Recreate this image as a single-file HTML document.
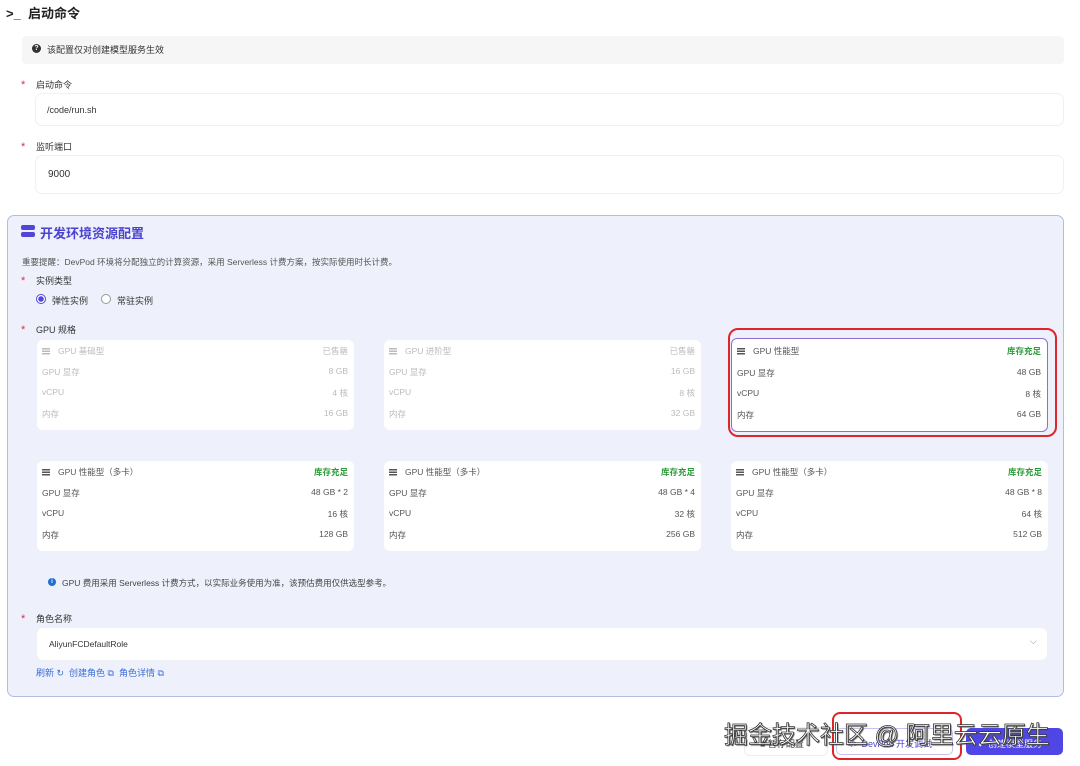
<!DOCTYPE html><html><head><meta charset="utf-8"><style>
*{box-sizing:border-box;margin:0;padding:0}
body{width:1080px;height:766px;background:#fff;font-family:"Liberation Sans","Noto Sans CJK SC",sans-serif;position:relative;overflow:hidden;color:#333}
.a{position:absolute}
.f9{font-size:9px}
.star{color:#d0334b;font-size:11px}
.inp{background:#fff;border-radius:6px;box-shadow:0 0 0 1px #f0f0f2}
.card{position:absolute;width:317px;height:90px;background:#fff;border-radius:6px;font-size:8.5px;color:#555}
.card .r{position:absolute;left:5px;right:6px;display:flex;justify-content:space-between}
.card.dis{color:#bbb}
.ok{color:#2e9b3a;font-weight:bold}
.ic{display:inline-block;width:8px;height:7px;background:repeating-linear-gradient(#555 0 1.5px,transparent 1.5px 2.5px);margin-right:8px;vertical-align:middle}
.dis .ic{background:repeating-linear-gradient(#bbb 0 1.5px,transparent 1.5px 2.5px)}
.lnk{color:#3b6fd6;font-size:9px}
</style></head><body>
<div class="a" style="left:6px;top:3px;font-size:13px;font-weight:bold;color:#222">&gt;_&nbsp; 启动命令</div>
<div class="a" style="left:22px;top:36px;width:1042px;height:28px;background:#f6f6f7;border-radius:4px"></div>
<div class="a" style="left:32px;top:44px;width:9px;height:9px;border-radius:50%;background:#333;color:#fff;font-size:7px;text-align:center;line-height:9px;font-weight:bold">?</div>
<div class="a f9" style="left:47px;top:43px">该配置仅对创建模型服务生效</div>
<div class="a star" style="left:21px;top:79px">*</div><div class="a f9" style="left:36px;top:78px">启动命令</div>
<div class="a inp" style="left:36px;top:94px;width:1027px;height:31px"></div>
<div class="a f9" style="left:47px;top:105px">/code/run.sh</div>
<div class="a star" style="left:21px;top:141px">*</div><div class="a f9" style="left:36px;top:140px">监听端口</div>
<div class="a inp" style="left:36px;top:156px;width:1027px;height:37px"></div>
<div class="a" style="left:48px;top:169px;font-size:10px">9000</div>

<div class="a" style="left:7px;top:215px;width:1057px;height:482px;background:#eef1fb;border:1px solid #b8bbe0;border-radius:7px"></div>
<div class="a" style="left:21px;top:225px;width:14px;height:5px;background:#5046d8;border-radius:2px"></div>
<div class="a" style="left:21px;top:232px;width:14px;height:5px;background:#5046d8;border-radius:2px"></div>
<div class="a" style="left:40px;top:223px;font-size:13px;font-weight:bold;color:#4b42cf">开发环境资源配置</div>
<div class="a" style="left:22px;top:256px;font-size:8.5px;color:#555">重要提醒：DevPod 环境将分配独立的计算资源，采用 Serverless 计费方案，按实际使用时长计费。</div>
<div class="a star" style="left:21px;top:275px">*</div><div class="a f9" style="left:36px;top:274px">实例类型</div>
<div class="a" style="left:36px;top:294px;width:10px;height:10px;border-radius:50%;border:1px solid #5046d8;background:radial-gradient(#5046d8 2.5px,#fff 3px)"></div>
<div class="a f9" style="left:52px;top:294px">弹性实例</div>
<div class="a" style="left:101px;top:294px;width:10px;height:10px;border-radius:50%;border:1px solid #999;background:#fff"></div>
<div class="a f9" style="left:117px;top:294px">常驻实例</div>
<div class="a star" style="left:21px;top:324px">*</div><div class="a f9" style="left:36px;top:323px">GPU 规格</div>

<div class="card dis" style="left:37px;top:340px"><div class="r" style="top:5px"><span><i class="ic"></i>GPU 基础型</span><span>已售罄</span></div><div class="r" style="top:26px"><span>GPU 显存</span><span>8 GB</span></div><div class="r" style="top:47px"><span>vCPU</span><span>4 核</span></div><div class="r" style="top:68px"><span>内存</span><span>16 GB</span></div></div>
<div class="card dis" style="left:384px;top:340px"><div class="r" style="top:5px"><span><i class="ic"></i>GPU 进阶型</span><span>已售罄</span></div><div class="r" style="top:26px"><span>GPU 显存</span><span>16 GB</span></div><div class="r" style="top:47px"><span>vCPU</span><span>8 核</span></div><div class="r" style="top:68px"><span>内存</span><span>32 GB</span></div></div>
<div class="card" style="left:731px;top:338px;height:94px;border:1px solid #8b6fd6"><div class="r" style="top:6px"><span><i class="ic"></i>GPU 性能型</span><span class="ok">库存充足</span></div><div class="r" style="top:28px"><span>GPU 显存</span><span>48 GB</span></div><div class="r" style="top:49px"><span>vCPU</span><span>8 核</span></div><div class="r" style="top:70px"><span>内存</span><span>64 GB</span></div></div>
<div class="a" style="left:728px;top:328px;width:329px;height:109px;border:2.5px solid #e0252a;border-radius:10px"></div>

<div class="card" style="left:37px;top:461px"><div class="r" style="top:5px"><span><i class="ic"></i>GPU 性能型（多卡）</span><span class="ok">库存充足</span></div><div class="r" style="top:26px"><span>GPU 显存</span><span>48 GB * 2</span></div><div class="r" style="top:47px"><span>vCPU</span><span>16 核</span></div><div class="r" style="top:68px"><span>内存</span><span>128 GB</span></div></div>
<div class="card" style="left:384px;top:461px"><div class="r" style="top:5px"><span><i class="ic"></i>GPU 性能型（多卡）</span><span class="ok">库存充足</span></div><div class="r" style="top:26px"><span>GPU 显存</span><span>48 GB * 4</span></div><div class="r" style="top:47px"><span>vCPU</span><span>32 核</span></div><div class="r" style="top:68px"><span>内存</span><span>256 GB</span></div></div>
<div class="card" style="left:731px;top:461px"><div class="r" style="top:5px"><span><i class="ic"></i>GPU 性能型（多卡）</span><span class="ok">库存充足</span></div><div class="r" style="top:26px"><span>GPU 显存</span><span>48 GB * 8</span></div><div class="r" style="top:47px"><span>vCPU</span><span>64 核</span></div><div class="r" style="top:68px"><span>内存</span><span>512 GB</span></div></div>

<div class="a" style="left:48px;top:578px;width:8px;height:8px;border-radius:50%;background:#1f6fd0;color:#fff;font-size:6px;text-align:center;line-height:8px;font-weight:bold">i</div>
<div class="a" style="left:62px;top:577px;font-size:8.5px;color:#444">GPU 费用采用 Serverless 计费方式，以实际业务使用为准，该预估费用仅供选型参考。</div>
<div class="a star" style="left:21px;top:613px">*</div><div class="a f9" style="left:36px;top:612px">角色名称</div>
<div class="a inp" style="left:37px;top:628px;width:1010px;height:32px"></div>
<div class="a" style="left:49px;top:639px;font-size:8.5px">AliyunFCDefaultRole</div>
<div class="a" style="left:1030px;top:636px;font-size:9px;color:#888">⌵</div>
<div class="a lnk" style="left:36px;top:666px">刷新 ↻ &nbsp;创建角色 ⧉ &nbsp;角色详情 ⧉</div>

<div class="a" style="left:745px;top:728px;width:82px;height:27px;background:#fff;border-radius:5px;box-shadow:0 0 0 1px #eee"></div>
<div class="a f9" style="left:760px;top:737px;color:#333">■ 暂存配置</div>
<div class="a" style="left:836px;top:728px;width:117px;height:27px;background:#fff;border:1px solid #c9c2ee;border-radius:5px"></div>
<div class="a f9" style="left:846px;top:737px;color:#4b42cf">&lt;/&gt; DevPod 开发调试</div>
<div class="a" style="left:966px;top:728px;width:97px;height:27px;background:#4f46e5;border-radius:5px"></div>
<div class="a f9" style="left:978px;top:737px;color:#fff">✔ 创建模型服务</div>
<div class="a" style="left:832px;top:712px;width:130px;height:48px;border:2.5px solid #e0252a;border-radius:8px"></div>
<div class="a" style="left:724px;top:715px;font-size:24px;color:#fff;-webkit-text-stroke:0.8px #333;text-shadow:1px 1px 1px #555">掘金技术社区 @ 阿里云云原生</div>
</body></html>
